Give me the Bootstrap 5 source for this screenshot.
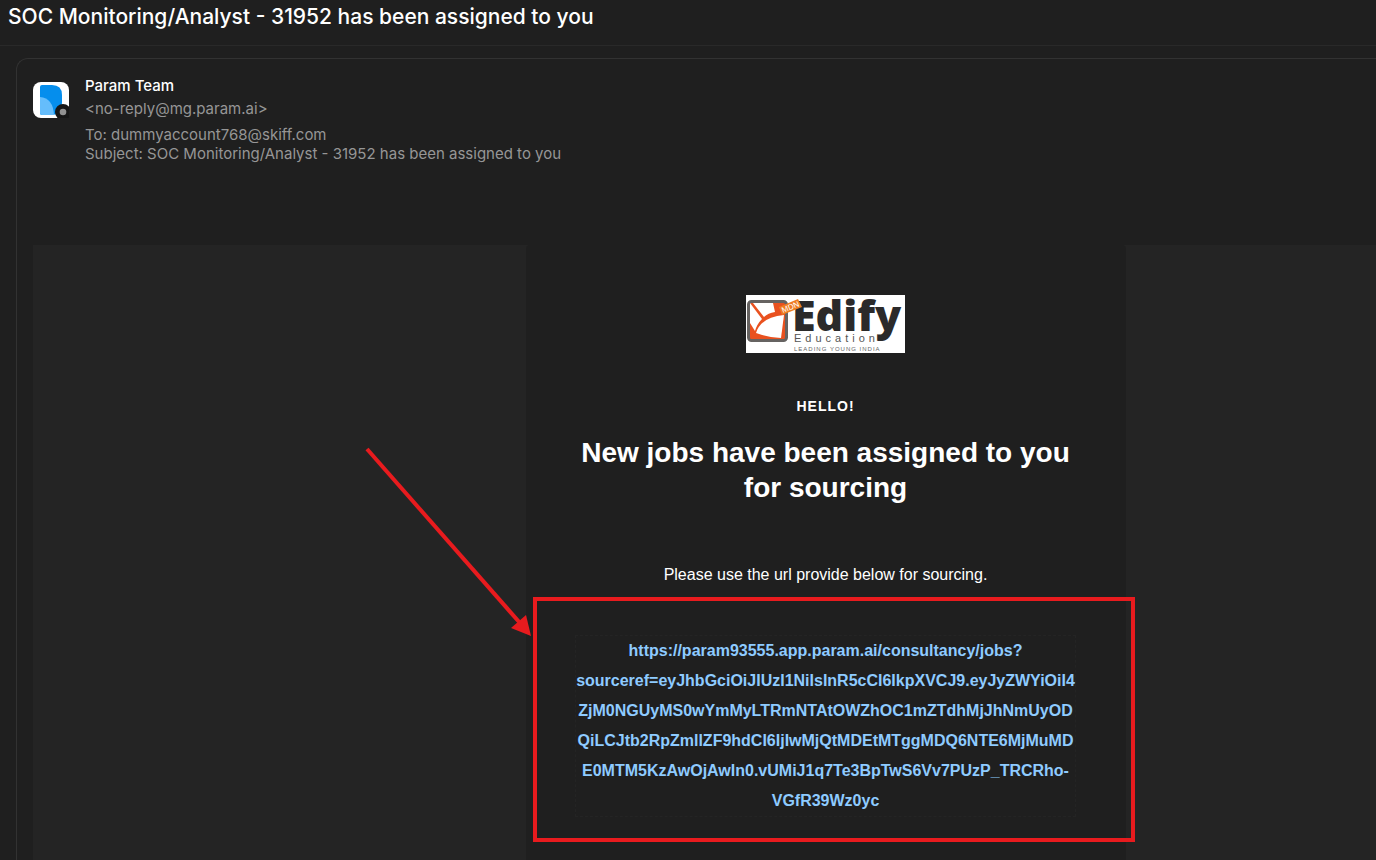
<!DOCTYPE html>
<html lang="en">
<head>
<meta charset="utf-8">
<meta name="viewport" content="width=device-width, initial-scale=1">
<title>SOC Monitoring/Analyst - 31952 has been assigned to you</title>
<link href="https://cdn.jsdelivr.net/npm/bootstrap@5.3.0/dist/css/bootstrap.min.css" rel="stylesheet">
<style>
  body { background: #1f1f1f; color: #fff; font-family: Inter, sans-serif; overflow: hidden; }
  .thread-header { border-bottom: 1px solid #292929; padding: 0 8px 12px; }
  .thread-title { font-size: 21px; line-height: 33px; font-weight: 500; }
  .message { border: 1px solid #323232; border-width: 1px 0 0 1px; border-radius: 12px 0 0 0; margin: 12px 0 0 16px; padding: 15px 0 0 16px; }
  .sender-name { font-size: 15px; line-height: 23px; font-weight: 500; }
  .sender-meta { font-size: 15px; line-height: 19px; color: #969696; }
  .sender-address { line-height: 23px; margin-bottom: 5px; }
  .avatar { margin-top: 8px; }
  .mail-body { background: #242424; margin-top: 82px; display: grid; grid-template-columns: minmax(0, 493fr) minmax(0, 600px) minmax(0, 250fr); font-family: "Liberation Sans", Arial, sans-serif; }
  .mail-sheet { grid-column: 2; background: #1f1f1f; border-radius: 4px 4px 0 0; padding: 50px 50px 80px 49px; min-height: 640px; }
  .greeting { font-size: 14px; line-height: 20px; font-weight: 700; letter-spacing: 1px; margin: 43px 0 0; }
  .headline { font-size: 28px; line-height: 35px; font-weight: 700; margin: 19px 0 0; }
  .notice { font-size: 16px; line-height: 24px; margin: 58px 0 0; }
  .job-area { margin-top: 48px; }
  .job-link { display: block; border: 1px dashed #242424; font-size: 16px; line-height: 30px; font-weight: 700; color: #8ecbff; text-decoration: none; overflow-wrap: break-word; }
  .marker-box { inset: -38px -59px -25px -42px; border: 4px solid #e81b1e; pointer-events: none; }
  .marker-arrow { right: calc(100% + 42px); top: -190px; pointer-events: none; }
</style>
</head>
<body>
<header class="thread-header">
  <h1 class="thread-title mb-0">SOC Monitoring/Analyst - 31952 has been assigned to you</h1>
</header>
<main>
  <article class="message">
    <div class="d-flex gap-3">
      <svg class="avatar flex-shrink-0" width="36" height="36" viewBox="0 0 36 36" aria-hidden="true">
        <rect width="36" height="36" rx="8" fill="#fff"/>
        <path d="M9 3H19Q29 3 29 13V20Q29 33 18 33H9Q7 33 7 31V5Q7 3 9 3Z" fill="#058eed"/>
        <path d="M7 15Q20 16 21 33H9Q7 33 7 31Z" fill="#65bdfb"/>
        <circle cx="30" cy="30" r="8" fill="#171717"/>
        <circle cx="30" cy="30" r="3.3" fill="#929292"/>
      </svg>
      <div>
        <div class="sender-name">Param Team</div>
        <div class="sender-meta sender-address">&lt;no-reply@mg.param.ai&gt;</div>
        <div class="sender-meta">To: dummyaccount768@skiff.com</div>
        <div class="sender-meta">Subject: SOC Monitoring/Analyst - 31952 has been assigned to you</div>
      </div>
    </div>
    <div class="mail-body">
      <section class="mail-sheet text-center">
        <svg class="d-block mx-auto" width="159" height="58" viewBox="0 0 159 58" overflow="visible" role="img" aria-label="MDN Edify Education">
          <rect width="159" height="58" fill="#fff"/>
          <rect x="2.500" y="6.500" width="38" height="39" rx="3" fill="#e9511f" stroke="#666361" stroke-width="3"/>
          <path d="M7 8H27L29 17Q22 18 18 22Z" fill="#fff"/>
          <path d="M4 8L16 24Q11 29 9 36L4 28Z" fill="#fff"/>
          <path d="M10 38Q15 22 38 20L35 43Q20 42 10 38Z" fill="#fff"/>
          <text x="46" y="36" font-family="Open Sans, sans-serif" font-weight="800" font-size="43" fill="#2b2a2a">Edify</text>
          <path d="M33 12L52 4L56 12L36 20Z" fill="#ef7d21"/>
          <text x="37" y="18" transform="rotate(-22 37 18)" font-family="Liberation Sans, sans-serif" font-size="8" fill="#fff">MDN</text>
          <text x="48" y="47" font-family="Liberation Sans, sans-serif" font-size="11" letter-spacing="4" fill="#555">Education</text>
          <text x="48" y="56" font-family="Liberation Sans, sans-serif" font-size="6" letter-spacing="1" fill="#666">LEADING YOUNG INDIA</text>
        </svg>
        <p class="greeting">HELLO!</p>
        <h2 class="headline">New jobs have been assigned to you for sourcing</h2>
        <p class="notice">Please use the url provide below for sourcing.</p>
        <div class="job-area position-relative">
          <a class="job-link" href="#">https://param93555.app.param.ai/consultancy/jobs?<wbr>sourceref=eyJhbGciOiJIUzI1NiIsInR5cCI6IkpXVCJ9.eyJyZWYiOiI4ZjM0NGUyMS0wYmMyLTRmNTAtOWZhOC1mZTdhMjJhNmUyODQiLCJtb2RpZmllZF9hdCI6IjIwMjQtMDEtMTggMDQ6NTE6MjMuMDE0MTM5KzAwOjAwIn0.vUMiJ1q7Te3BpTwS6Vv7PUzP_TRCRho-VGfR39Wz0yc</a>
          <div class="marker-box position-absolute"></div>
          <svg class="marker-arrow position-absolute" width="170" height="194" viewBox="0 0 170 194" aria-hidden="true">
            <path d="M4 4L157 178" stroke="#e81b1e" stroke-width="4"/>
            <path d="M168 191L148 183L163 170Z" fill="#e81b1e"/>
          </svg>
        </div>
      </section>
    </div>
  </article>
</main>
<script src="https://cdn.jsdelivr.net/npm/bootstrap@5.3.0/dist/js/bootstrap.bundle.min.js"></script>
</body>
</html>
